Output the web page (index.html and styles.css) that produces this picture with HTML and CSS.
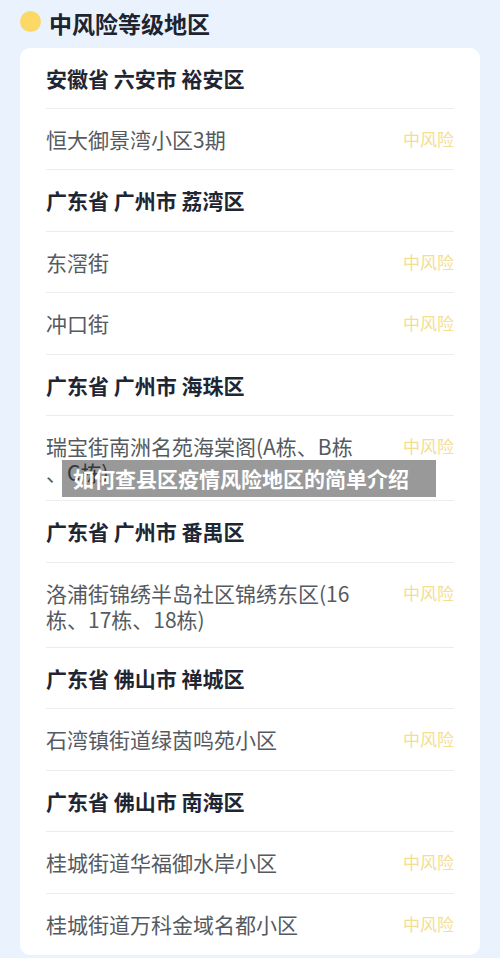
FILE: index.html
```html
<!DOCTYPE html>
<html>
<head>
    <title>中风险等级地区</title>
    <link rel="stylesheet" href="styles.css">
</head>
<body>
    <div class="page">
        <header class="title">
            <span class="dot"></span>
            <h2>中风险等级地区</h2>
        </header>

        <div class="card">
            <div class="row area">安徽省 六安市 裕安区</div>
            <div class="row"><span class="name">恒大御景湾小区3期</span><span class="level">中风险</span></div>

            <div class="row area">广东省 广州市 荔湾区</div>
            <div class="row"><span class="name">东滘街</span><span class="level">中风险</span></div>
            <div class="row"><span class="name">冲口街</span><span class="level">中风险</span></div>

            <div class="row area">广东省 广州市 海珠区</div>
            <div class="row"><span class="name">瑞宝街南洲名苑海棠阁(A栋、B栋、C栋)</span><span class="level">中风险</span></div>

            <div class="row area">广东省 广州市 番禺区</div>
            <div class="row"><span class="name">洛浦街锦绣半岛社区锦绣东区(16栋、17栋、18栋)</span><span class="level">中风险</span></div>

            <div class="row area">广东省 佛山市 禅城区</div>
            <div class="row"><span class="name">石湾镇街道绿茵鸣苑小区</span><span class="level">中风险</span></div>

            <div class="row area">广东省 佛山市 南海区</div>
            <div class="row"><span class="name">桂城街道华福御水岸小区</span><span class="level">中风险</span></div>
            <div class="row"><span class="name">桂城街道万科金域名都小区</span><span class="level">中风险</span></div>
        </div>

        <div class="caption">如何查县区疫情风险地区的简单介绍</div>
    </div>
</body>
</html>
```

FILE: styles.css
```css
/* General */
body {
    margin: 0;
    padding: 0;
    background-color: #eaf3fd;
    font-family: "Noto Sans CJK SC", "Noto Sans", sans-serif;
}
.page {
    position: relative;
    width: 500px;
    height: 958px;
    overflow: hidden;
    padding: 0 20px;
    box-sizing: border-box;
}
/* Title */
.title {
    display: flex;
    align-items: center;
    height: 46px;
    padding-bottom: 2px;
}
.dot {
    width: 21px;
    height: 21px;
    border-radius: 50%;
    background-color: #fcd866;
    margin-right: 8px;
    margin-top: -4px;
}
.title h2 {
    margin: 0;
    font-size: 23px;
    line-height: 30px;
    font-weight: bold;
    color: #1d2430;
}
/* Card */
.card {
    background-color: #fff;
    border-radius: 10px;
    padding: 0 26px;
}
.row {
    display: flex;
    justify-content: space-between;
    align-items: flex-start;
    min-height: 61.5px;
    box-sizing: border-box;
    padding: 17px 0 15px;
    border-bottom: 1px solid #ededed;
    font-size: 21px;
    line-height: 26px;
    color: #555a61;
}
.row:first-child {
    min-height: 60.5px;
}
.row:last-child {
    border-bottom: none;
}
.row.area {
    font-weight: bold;
    color: #1f2633;
}
.name {
    max-width: 315px;
    line-break: anywhere;
}
.level {
    font-size: 17px;
    color: #f4de90;
    white-space: nowrap;
}
/* Caption */
.caption {
    position: absolute;
    left: 62px;
    top: 460px;
    width: 374px;
    height: 37px;
    box-sizing: border-box;
    padding-left: 11px;
    background-color: rgba(0, 0, 0, 0.4);
    color: #fff;
    font-size: 21px;
    font-weight: bold;
    line-height: 37px;
}
```
